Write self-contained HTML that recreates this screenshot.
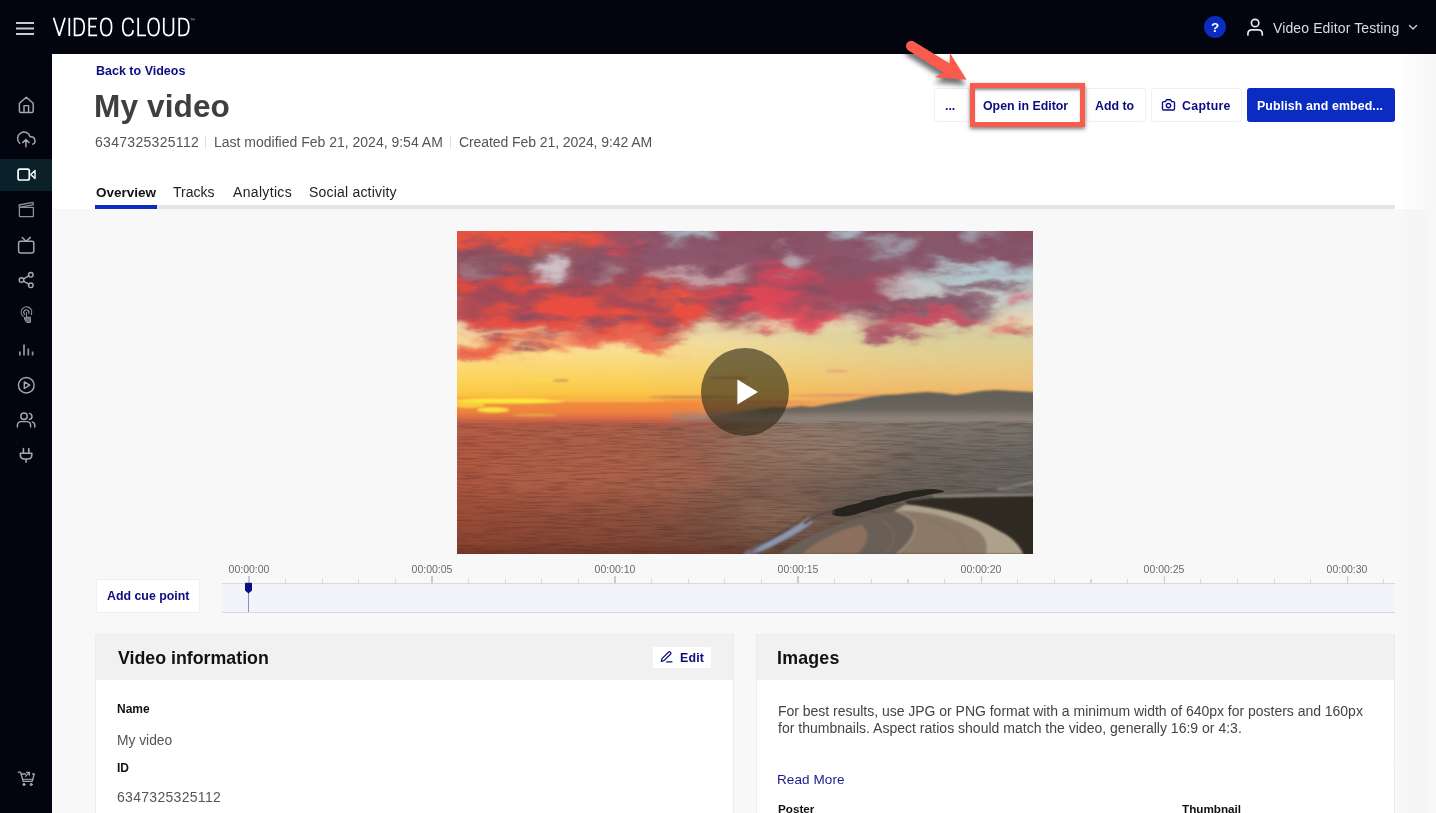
<!DOCTYPE html>
<html>
<head>
<meta charset="utf-8">
<title>My video</title>
<style>
*{box-sizing:border-box;margin:0;padding:0}
html,body{width:1436px;height:813px;overflow:hidden;background:#f8f8f8;font-family:"Liberation Sans",sans-serif;}
.abs{position:absolute}
#topbar{position:absolute;left:0;top:0;width:1436px;height:54px;background:#02040f}
#sidebar{position:absolute;left:0;top:0;width:52px;height:813px;background:#02040f}
#sideactive{position:absolute;left:0;top:159px;width:52px;height:31.5px;background:#0a212a}
#header{position:absolute;left:52px;top:54px;width:1384px;height:155px;background:#fff}
#rstrip{position:absolute;left:1400px;top:54px;width:36px;height:155px;background:linear-gradient(90deg,rgba(0,0,0,0),rgba(0,0,0,.012) 30%,rgba(0,0,0,.02) 60%,rgba(0,0,0,.03))}
.t{position:absolute;white-space:nowrap;line-height:1;will-change:transform}
.btn{position:absolute;top:88.3px;height:34.2px;background:#fff;border:1px solid #f0f0f0;border-radius:2.5px}
.bt{position:absolute;white-space:nowrap;line-height:1;will-change:transform;font-weight:bold;font-size:12.36px;color:#0d0d82}
.ico{position:absolute;fill:none;stroke:#b4b6bb;stroke-width:1.6;stroke-linecap:round;stroke-linejoin:round}
.panelhead{position:absolute;background:#f1f1f1}
.panel{position:absolute;background:#fff;border:1px solid #ececec}
</style>
</head>
<body>
<div id="topbar"></div>
<div id="sidebar"></div>
<div id="sideactive"></div>
<div id="header"></div>
<div id="rstrip"></div>
<div class="abs" style="left:1398px;top:209px;width:38px;height:604px;background:linear-gradient(90deg,#f8f8f8,#f5f5f5 35%,#f5f5f5 60%,#f9f9f9)"></div>

<!-- header text -->
<div class="t" id="back" style="left:95.6px;top:65.3px;font-size:12.5px;font-weight:bold;color:#0d0d82">Back to Videos</div>
<div class="t" id="title" style="left:94.4px;top:91.2px;font-size:31.6px;letter-spacing:.1px;font-weight:bold;color:#3f3f3f">My video</div>
<div class="t" id="meta1" style="left:94.6px;top:135.2px;font-size:14px;letter-spacing:.3px;color:#555">6347325325112</div>
<div class="abs" style="left:205px;top:136px;width:1px;height:13px;background:#e2e2e2"></div>
<div class="t" id="meta2" style="left:214.4px;top:135.2px;font-size:14px;color:#555">Last modified Feb 21, 2024, 9:54 AM</div>
<div class="abs" style="left:450px;top:136px;width:1px;height:13px;background:#e2e2e2"></div>
<div class="t" id="meta3" style="left:458.6px;top:135.2px;font-size:14px;letter-spacing:-.08px;color:#555">Created Feb 21, 2024, 9:42 AM</div>

<!-- tabs -->
<div class="t" id="tab1" style="left:95.6px;top:185.5px;font-size:13.5px;font-weight:bold;color:#111">Overview</div>
<div class="t" id="tab2" style="left:173.4px;top:185.3px;font-size:14px;color:#222">Tracks</div>
<div class="t" id="tab3" style="left:233.4px;top:185.3px;font-size:14px;letter-spacing:.33px;color:#222">Analytics</div>
<div class="t" id="tab4" style="left:309.2px;top:185.3px;font-size:14px;letter-spacing:.2px;color:#222">Social activity</div>
<div class="abs" style="left:95px;top:205px;width:1300px;height:4px;background:#e4e4e4"></div>
<div class="abs" style="left:95px;top:205px;width:62px;height:4px;background:#0b2cc0"></div>

<!-- buttons -->
<div class="btn" style="left:934px;width:36px"></div>
<div class="bt" id="b0" style="left:945px;top:99.9px">...</div>
<div class="btn" style="left:1086px;width:60px"></div>
<div class="bt" id="b2" style="left:1095.2px;top:99.9px">Add to</div>
<div class="btn" style="left:1151px;width:91px"></div>
<svg class="abs" style="left:1160px;top:97px" width="17" height="15" viewBox="0 0 17 15" fill="none" stroke="#0d0d82" stroke-width="1.35" stroke-linejoin="round"><path d="M3.6 4.6H5.4L6.4 2.7H10.6L11.6 4.6H13.4Q14.5 4.6 14.5 5.7V11.9Q14.5 13 13.4 13H3.6Q2.5 13 2.5 11.9V5.7Q2.5 4.6 3.6 4.6Z"/><circle cx="8.5" cy="8.6" r="2.15"/></svg>
<div class="bt" id="b3" style="left:1182px;top:99.9px;letter-spacing:.3px">Capture</div>
<div class="btn" style="left:1247px;width:148px;background:#0b2cc0;border-color:#0b2cc0"></div>
<div class="bt" id="b4" style="left:1257.4px;top:99.7px;letter-spacing:.12px;color:#fff">Publish and embed...</div>
<!-- red highlight -->
<div class="abs" id="redbox" style="left:970px;top:83px;width:115px;height:44px;background:#fff;border:5px solid #f95c4c;box-shadow:0 2px 4px rgba(0,0,0,.5), inset 0 3px 3px -1px rgba(0,0,0,.45)"></div>
<div class="bt" id="b1" style="left:983.2px;top:99.9px">Open in Editor</div>

<!-- topbar content -->
<svg class="abs" style="left:0;top:0" width="220" height="54" viewBox="0 0 220 54">
  <g stroke="#c9cacd" stroke-width="1.8" fill="none">
    <path d="M16 23H34M16 28.5H34M16 34H34"/>
  </g>
  <g id="logo" transform="translate(0,-.45)" stroke="#fff" stroke-width="1.75" fill="none" stroke-linejoin="miter" stroke-linecap="butt">
    <path d="M53.6 18.3L59.3 36.2L65 18.3" stroke-linejoin="bevel"/>
    <path d="M69.3 18.3V36.5"/>
    <path d="M74.6 19H78.2C82.6 19 84.2 21.5 84.2 27.4C84.2 33.3 82.6 35.8 78.2 35.8H74.6Z"/>
    <path d="M97 19H89.2V35.8H97.2M89.2 27H96"/>
    <path d="M106.2 18.8C110 18.8 111.6 21.4 111.6 27.4C111.6 33.4 110 36 106.2 36C102.4 36 100.8 33.4 100.8 27.4C100.8 21.4 102.4 18.8 106.2 18.8Z"/>
    <path d="M133 23.5C132.8 20.4 131.2 18.8 128.2 18.8C124.4 18.8 122.8 21.4 122.8 27.4C122.8 33.4 124.4 36 128.2 36C131.3 36 132.9 34.2 133.1 30.6"/>
    <path d="M138.2 18.3V35.8H146"/>
    <path d="M153.6 18.8C157.4 18.8 159 21.4 159 27.4C159 33.4 157.4 36 153.6 36C149.8 36 148.2 33.4 148.2 27.4C148.2 21.4 149.8 18.8 153.6 18.8Z"/>
    <path d="M163.8 18.3V30.8C163.8 34.4 165.4 36 168.6 36C171.8 36 173.4 34.4 173.4 30.8V18.3"/>
    <path d="M179.2 19H182.8C187.2 19 188.8 21.5 188.8 27.4C188.8 33.3 187.2 35.8 182.8 35.8H179.2Z"/>
  </g>
  <path d="M190.6 18.6H192.2M191.4 18.6V20.4M192.8 20.4V18.6L193.5 19.8L194.2 18.6V20.4" stroke="#aaa" stroke-width=".5" fill="none"/>
</svg>
<div class="abs" style="left:1204px;top:16px;width:22px;height:22px;border-radius:11px;background:#0b2cc0"></div>
<div class="t" id="q" style="left:1211.2px;top:20.6px;font-size:13.5px;font-weight:bold;color:#fff">?</div>
<svg class="abs" style="left:1244px;top:16px" width="22" height="22" viewBox="0 0 22 22" fill="none" stroke="#e8e8ea" stroke-width="1.7" stroke-linecap="round">
  <circle cx="11.1" cy="7" r="3.7"/>
  <path d="M3.9 19V17.8C3.9 15.4 5.6 13.8 8 13.8H14.2C16.6 13.8 18.3 15.4 18.3 17.8V19"/>
</svg>
<div class="t" id="user" style="left:1273.3px;top:20.8px;font-size:14px;letter-spacing:.12px;color:#dcdce0">Video Editor Testing</div>
<svg class="abs" style="left:1407px;top:23px" width="12" height="9" viewBox="0 0 12 9" fill="none" stroke="#d0d0d4" stroke-width="1.4" stroke-linecap="round" stroke-linejoin="round"><path d="M2.5 2.5L6 6L9.5 2.5"/></svg>

<!-- sidebar icons -->
<svg class="abs" style="left:0;top:54px" width="52" height="759" viewBox="0 54 52 759" fill="none" stroke="#a6a8ae" stroke-width="1.45" stroke-linecap="round" stroke-linejoin="round">
  <!-- home -->
  <path d="M19.4 110.9V103.2L26.3 97.2L33.2 103.2V110.9Q33.2 112.4 31.7 112.4H20.9Q19.4 112.4 19.4 110.9ZM24 112.2V105.6H28.6V112.2"/>
  <!-- upload cloud -->
  <path d="M19.8 143.3A6.4 6.4 0 1 1 30.2 136.9A3.9 3.9 0 0 1 32.8 144.2M25.9 146.8V140M22.7 142.6L25.9 139.6L29.1 142.6"/>
  <!-- video camera active -->
  <g stroke="#fff" stroke-width="1.7"><rect x="18.1" y="169.2" width="11.2" height="10.8" rx="1.8"/><path d="M30.8 174.6L35 170.6V178.6Z" stroke-width="1.4"/></g>
  <!-- clapper -->
  <g stroke="#8f9096" stroke-width="1.3"><rect x="19.4" y="207.4" width="14" height="9.2" rx=".6"/><path d="M19.4 207.3L19 205L32.9 202.3L33.5 204.7Z"/></g>
  <!-- tv -->
  <rect x="18.6" y="241.3" width="15.2" height="11.6" rx="1.8"/><path d="M22.2 237.4L26.1 241.2L30.4 237.4"/>
  <!-- share -->
  <circle cx="30.8" cy="274.8" r="2.3"/><circle cx="21.5" cy="280" r="2.3"/><circle cx="30.8" cy="285.3" r="2.3"/><path d="M23.5 278.9L28.8 275.9M23.5 281.1L28.8 284.2"/>
  <!-- touch -->
  <g stroke="#9a9ca2" stroke-width="1.1"><path d="M23.2 316.4A5.3 5.3 0 1 1 31.3 314.4"/><path d="M24.6 314.4A2.6 2.6 0 1 1 28.7 313.6"/><path d="M26.4 312.6V318.2L24.4 317.4V319.4L26.8 322.4H30.4V317.2H26.6" stroke-width="1" fill="#6c6e74"/></g>
  <!-- analytics -->
  <path d="M19.9 351.6V355.6M24 344.6V355.6M28.3 348.6V355.6M32.6 351.6V355.6" stroke="#8f9096" stroke-width="1.8" stroke-linecap="butt"/>
  <!-- play circle -->
  <circle cx="26.3" cy="385.2" r="7.8"/><path d="M24.3 381.9L29.7 385.2L24.3 388.5Z"/>
  <!-- people -->
  <circle cx="24" cy="416.2" r="3.2"/><path d="M17.4 427V425.4C17.4 423 19.2 421.6 21.4 421.6H26.6C28.8 421.6 30.6 423 30.6 425.4V427M29.4 413.4C31 413.8 32 415 32 416.4C32 417.8 31 419 29.4 419.4M34.8 427V425.4C34.8 423.6 33.8 422.4 32.2 421.9"/>
  <!-- plug -->
  <path d="M23.4 448.6V453M28.8 448.6V453M20.4 453.2H31.8V455C31.8 457.6 29.8 459 27.6 459H24.6C22.4 459 20.4 457.6 20.4 455ZM26.1 459V462.2" stroke-width="1.6"/>
  <!-- cart -->
  <path d="M18.2 772.2H20.6L23.2 781.4H32.2L34.2 774H32.6M25.6 774H22" stroke-width="1.3"/><path d="M23 779.3H32.8" stroke-width="1"/><circle cx="24" cy="784.5" r="1.15" fill="#a6a8ae" stroke-width=".8"/><circle cx="31.2" cy="784.5" r="1.15" fill="#a6a8ae" stroke-width=".8"/><path d="M25.6 776.4L29.2 772.6M26.6 772.4H29.4V775.2" stroke-width="1.2"/>
</svg>

<!-- video -->
<svg class="abs" id="video" style="left:457px;top:231px" width="576" height="323" viewBox="0 0 576 323">
<defs>
  <linearGradient id="sky" x1="0" y1="0" x2="0" y2="1">
    <stop offset="0" stop-color="#a6c0ca"/>
    <stop offset=".2" stop-color="#c2cfcc"/>
    <stop offset=".285" stop-color="#eadab4"/>
    <stop offset=".345" stop-color="#fde3a0"/>
    <stop offset=".40" stop-color="#fcdc80"/>
    <stop offset=".465" stop-color="#fcd256"/>
    <stop offset=".515" stop-color="#fbc640"/>
    <stop offset=".55" stop-color="#f59a40"/>
    <stop offset=".585" stop-color="#e8683e"/>
    <stop offset=".60" stop-color="#c95a45"/>
    <stop offset="1" stop-color="#c95a45"/>
  </linearGradient>
  <linearGradient id="skyR" x1="0" y1="0" x2="0" y2="1">
    <stop offset="0" stop-color="#d2cfa4"/>
    <stop offset=".3" stop-color="#e2cd8e"/>
    <stop offset=".55" stop-color="#ecc078"/>
    <stop offset=".75" stop-color="#f0ae5e"/>
    <stop offset="1" stop-color="#ee9e58"/>
  </linearGradient>
  <linearGradient id="skyRm" x1="0" y1="0" x2="1" y2="0">
    <stop offset="0" stop-color="#fff" stop-opacity="0"/>
    <stop offset=".3" stop-color="#fff" stop-opacity=".08"/>
    <stop offset=".5" stop-color="#fff" stop-opacity=".45"/>
    <stop offset=".75" stop-color="#fff" stop-opacity=".9"/>
    <stop offset="1" stop-color="#fff" stop-opacity="1"/>
  </linearGradient>
  <mask id="skyMask" maskUnits="userSpaceOnUse" x="0" y="0" width="576" height="323"><rect x="0" y="0" width="576" height="323" fill="url(#skyRm)"/></mask>
  <linearGradient id="sea" x1="0" y1="0" x2="1" y2="0">
    <stop offset="0" stop-color="#b45a42"/>
    <stop offset=".3" stop-color="#a45e48"/>
    <stop offset=".5" stop-color="#8c6453"/>
    <stop offset=".65" stop-color="#7b675b"/>
    <stop offset=".8" stop-color="#6e665e"/>
    <stop offset="1" stop-color="#686660"/>
  </linearGradient>
  <linearGradient id="seaR" x1="0" y1="0" x2="0" y2="1">
    <stop offset="0" stop-color="#000" stop-opacity="0"/>
    <stop offset=".45" stop-color="#000" stop-opacity=".02"/>
    <stop offset="1" stop-color="#200800" stop-opacity=".3"/>
  </linearGradient>
  <filter id="blur3" filterUnits="userSpaceOnUse" x="-60" y="-60" width="700" height="450"><feGaussianBlur stdDeviation="3"/></filter>
  <filter id="blur5" filterUnits="userSpaceOnUse" x="-60" y="-60" width="700" height="450"><feGaussianBlur stdDeviation="5"/></filter>
  <filter id="blur8" filterUnits="userSpaceOnUse" x="-60" y="-60" width="700" height="450"><feGaussianBlur stdDeviation="8"/></filter>
  <filter id="blur14" filterUnits="userSpaceOnUse" x="-60" y="-60" width="700" height="450"><feGaussianBlur stdDeviation="14"/></filter>
  <filter id="blur1" filterUnits="userSpaceOnUse" x="-60" y="-60" width="700" height="450"><feGaussianBlur stdDeviation="1.2"/></filter>
  <filter id="rag" filterUnits="userSpaceOnUse" x="-60" y="-60" width="700" height="450" color-interpolation-filters="sRGB">
    <feTurbulence type="fractalNoise" baseFrequency="0.022 0.05" numOctaves="4" seed="7" result="n"/>
    <feDisplacementMap in="SourceGraphic" in2="n" scale="34" xChannelSelector="R" yChannelSelector="G" result="d"/>
    <feTurbulence type="fractalNoise" baseFrequency="0.02 0.06" numOctaves="4" seed="23" result="n2"/>
    <feColorMatrix in="n2" type="matrix" values="0 0 0 0 0.53  0 0 0 0 0.30  0 0 0 0 0.38  3.2 0 0 0 -1.55" result="shade"/>
    <feComposite in="shade" in2="d" operator="in" result="shadeIn"/>
    <feMerge><feMergeNode in="d"/><feMergeNode in="shadeIn"/></feMerge>
    <feGaussianBlur stdDeviation="0.7"/>
  </filter>
  <filter id="rag0" filterUnits="userSpaceOnUse" x="-60" y="-60" width="700" height="450" color-interpolation-filters="sRGB">
    <feTurbulence type="fractalNoise" baseFrequency="0.022 0.05" numOctaves="4" seed="7" result="n"/>
    <feDisplacementMap in="SourceGraphic" in2="n" scale="34" xChannelSelector="R" yChannelSelector="G"/>
    <feGaussianBlur stdDeviation="0.7"/>
  </filter>
  <filter id="ripple" filterUnits="userSpaceOnUse" x="0" y="190" width="576" height="140" color-interpolation-filters="sRGB">
    <feTurbulence type="fractalNoise" baseFrequency="0.035 0.55" numOctaves="3" seed="3" result="n"/>
    <feColorMatrix in="n" type="matrix" values="0 0 0 0 0.16  0 0 0 0 0.07  0 0 0 0 0.06  1.6 0 0 0 -0.66"/>
  </filter>
  <clipPath id="vclip"><rect x="0" y="0" width="576" height="323"/></clipPath>
</defs>
<g clip-path="url(#vclip)">
  <rect width="576" height="323" fill="url(#sky)"/>
  <g mask="url(#skyMask)"><rect x="-20" y="96" width="620" height="100" fill="url(#skyR)" filter="url(#blur5)"/></g>
  <g id="clouds" filter="url(#rag)">
    <!-- mauve base layer across top -->
    <g filter="url(#blur8)">
      <rect x="-40" y="-40" width="360" height="112" fill="#b04a52"/><rect x="280" y="-40" width="340" height="66" fill="#8a5669"/><ellipse cx="60" cy="30" rx="100" ry="22" fill="#8f5663"/>
      <ellipse cx="215" cy="28" rx="85" ry="34" fill="#8f566a"/>
      <ellipse cx="340" cy="30" rx="70" ry="34" fill="#8c5469"/>
      <ellipse cx="440" cy="22" rx="70" ry="20" fill="#8a5669"/>
      <ellipse cx="535" cy="18" rx="60" ry="20" fill="#85566a"/>
      <ellipse cx="150" cy="70" rx="170" ry="30" fill="#b04a52"/>
      <ellipse cx="370" cy="62" rx="90" ry="24" fill="#a04c60"/>
      <ellipse cx="470" cy="80" rx="70" ry="10" fill="#8e596a"/>
    </g>
    <!-- red highlights -->
    <g filter="url(#blur5)">
      <ellipse cx="50" cy="6" rx="105" ry="15" fill="#ea5340"/>
      <ellipse cx="40" cy="52" rx="60" ry="8" fill="#e84a3e"/>
      <ellipse cx="130" cy="82" rx="140" ry="18" fill="#ea4d40"/>
      <ellipse cx="215" cy="66" rx="50" ry="8" fill="#ee5440"/>
      <ellipse cx="165" cy="20" rx="14" ry="9" fill="#e34a50"/>
      <ellipse cx="60" cy="112" rx="60" ry="6" fill="#ee6a4a"/>
      <ellipse cx="20" cy="118" rx="26" ry="10" fill="#ec6548"/>
      <ellipse cx="170" cy="108" rx="60" ry="7" fill="#ec5c48"/>
      <ellipse cx="300" cy="66" rx="60" ry="12" fill="#dc4656"/>
      <ellipse cx="340" cy="86" rx="45" ry="12" fill="#e2505a"/>
      <ellipse cx="330" cy="40" rx="35" ry="8" fill="#d0475c"/>
      <ellipse cx="470" cy="86" rx="50" ry="5" fill="#cf4c5e"/>
      <ellipse cx="430" cy="98" rx="30" ry="4" fill="#b4566a"/>
      <ellipse cx="555" cy="97" rx="20" ry="2.5" fill="#e0606a"/>
      <ellipse cx="560" cy="68" rx="16" ry="3" fill="#d46070"/>
    </g>
    <!-- dark mauve patches on top -->
    <g filter="url(#blur5)">
      <ellipse cx="40" cy="30" rx="40" ry="7" fill="#8a5460"/>
      <ellipse cx="45" cy="66" rx="34" ry="7" fill="#9c4858"/>
      <ellipse cx="150" cy="36" rx="30" ry="16" fill="#8f5468"/>
      <ellipse cx="230" cy="24" rx="40" ry="14" fill="#8c566a"/>
      <ellipse cx="180" cy="72" rx="40" ry="8" fill="#a04858"/>
      <ellipse cx="20" cy="78" rx="24" ry="6" fill="#a24c58"/>
      <ellipse cx="330" cy="14" rx="45" ry="12" fill="#8a5268"/>
      <ellipse cx="400" cy="40" rx="40" ry="12" fill="#8a5268"/>
      <ellipse cx="500" cy="24" rx="50" ry="12" fill="#87566a"/>
      <ellipse cx="530" cy="56" rx="46" ry="3.5" fill="#7f5a6a"/>
      <ellipse cx="480" cy="72" rx="55" ry="4" fill="#84586a"/>
      <ellipse cx="350" cy="76" rx="30" ry="5" fill="#9a4c60"/>
    </g>
  </g>
  <g id="gaps" filter="url(#rag0)">
    <!-- light sky gaps -->
    <g filter="url(#blur5)" opacity=".9">
      <ellipse cx="95" cy="36" rx="18" ry="10" fill="#d8d2d8"/>
      <ellipse cx="150" cy="46" rx="14" ry="2.2" fill="#cfc2c6"/>
      <ellipse cx="240" cy="44" rx="50" ry="5" fill="#d8c6c6"/>
      <ellipse cx="232" cy="4" rx="24" ry="7" fill="#a9c8d2"/>
      <ellipse cx="395" cy="4" rx="14" ry="8" fill="#a9c8d2"/>
      <ellipse cx="435" cy="14" rx="26" ry="5" fill="#a8bfca"/>
      <ellipse cx="335" cy="26" rx="14" ry="6" fill="#c8c4cc"/>
      <ellipse cx="540" cy="44" rx="50" ry="9" fill="#b4ccd2"/>
      <ellipse cx="545" cy="66" rx="45" ry="6" fill="#c8d2cc"/>
      <ellipse cx="455" cy="60" rx="30" ry="7" fill="#c9cfcc"/>
      <ellipse cx="20" cy="38" rx="20" ry="2.2" fill="#c9b8bc"/>
      <ellipse cx="525" cy="4" rx="18" ry="5" fill="#a9c4cf"/>
    </g>
    <g filter="url(#blur3)">
      <ellipse cx="530" cy="56" rx="46" ry="3" fill="#7f5a6a"/>
      <ellipse cx="480" cy="72" rx="55" ry="3.5" fill="#84586a"/>
      <ellipse cx="470" cy="86" rx="48" ry="4" fill="#c84c5e"/>
      <ellipse cx="555" cy="97" rx="20" ry="2" fill="#e0606a"/>
      <ellipse cx="562" cy="68" rx="14" ry="2.4" fill="#d46070"/>
      <ellipse cx="430" cy="98" rx="28" ry="3.4" fill="#b4566a"/>
    </g>
  </g>
  <g id="lowsky">
    <g filter="url(#blur3)">
      <rect x="-20" y="169" width="270" height="24" fill="#f4873c"/>
      <rect x="240" y="174" width="130" height="16" fill="#f0904a" fill-opacity=".75"/>
      <rect x="360" y="170" width="100" height="8" fill="#ec9a62" fill-opacity=".6"/>
    </g>
    <g filter="url(#blur1)">
      <ellipse cx="52" cy="170" rx="56" ry="2.6" fill="#fdee3c"/>
      <ellipse cx="12" cy="174" rx="16" ry="3" fill="#f9d13c"/>
      <ellipse cx="36" cy="179" rx="16" ry="3" fill="#fdee3c"/>
      <ellipse cx="78" cy="184.5" rx="23" ry="1.4" fill="#fbdc3c"/>
      <ellipse cx="150" cy="169" rx="60" ry="1.6" fill="#f9c048"/>
      <ellipse cx="236" cy="166" rx="44" ry="1.1" fill="#c48a52"/>
      <ellipse cx="386" cy="164.5" rx="54" ry="1.2" fill="#e29070"/>
      <ellipse cx="300" cy="171" rx="60" ry="1.2" fill="#e9925a"/>
      <ellipse cx="88" cy="149" rx="14" ry="1.1" fill="#f6e04a"/>
      <ellipse cx="104" cy="149.5" rx="8" ry="1" fill="#c9924a"/>
      <ellipse cx="272" cy="147" rx="20" ry="1" fill="#c98a52"/>
      <ellipse cx="380" cy="140" rx="12" ry="1" fill="#e8a078"/>
    </g>
    <rect x="-20" y="185" width="280" height="8" fill="#cf5c44" fill-opacity=".85" filter="url(#blur3)"/>
    <!-- far mountains -->
    <path d="M300 186L330 181L352 177L372 173L392 170L412 166L428 164L440 163.5L455 162L470 161L486 162L498 164L512 162L524 160L540 159L556 160L576 161L610 161V194H300Z" fill="#625e58" filter="url(#blur1)"/>
    <!-- near ridge -->
    <path d="M222 193L240 189L262 185L282 181L300 178L318 176L330 177L345 175L362 178L390 182L420 186L440 193Z" fill="#625b55" filter="url(#blur1)"/>
    <path d="M222 193L240 189L262 185L282 181L300 178" stroke="#b89078" stroke-width="3" fill="none" filter="url(#blur3)"/>
    <rect x="215" y="183" width="420" height="11" fill="#958a80" fill-opacity=".75" filter="url(#blur3)"/>
  </g>
  <g id="seag">
    <rect x="0" y="192" width="576" height="131" fill="url(#sea)"/>
    <rect x="0" y="192" width="576" height="131" fill="url(#seaR)"/>
    <g filter="url(#blur14)">
      <ellipse cx="440" cy="198" rx="200" ry="7" fill="#a09488" fill-opacity=".8"/>
      <ellipse cx="120" cy="198" rx="200" ry="6" fill="#c06a58" fill-opacity=".5"/>
      <ellipse cx="150" cy="240" rx="120" ry="22" fill="#b8684e" fill-opacity=".45"/>
      <ellipse cx="320" cy="282" rx="46" ry="13" fill="#b08468" fill-opacity=".55"/>
      <ellipse cx="345" cy="222" rx="85" ry="15" fill="#a88a72" fill-opacity=".5"/><ellipse cx="320" cy="268" rx="75" ry="12" fill="#6a5246" fill-opacity=".45"/>
      <ellipse cx="420" cy="268" rx="60" ry="10" fill="#5e564e" fill-opacity=".6"/>
    </g>
    <rect x="0" y="194" width="576" height="129" fill="#000" filter="url(#ripple)" opacity=".36"/>
    <rect x="-20" y="189" width="290" height="5" fill="#b8584a" fill-opacity=".6" filter="url(#blur1)"/>
    <!-- shallow water / wet sand -->
    <g filter="url(#blur1)">
      <path d="M322 323C350 304 382 290 420 283C452 278 490 270 520 268L576 266V323Z" fill="#6a5f56"/>
      <path d="M345 323C362 308 384 298 404 294C414 300 412 312 400 323Z" fill="#94745f" fill-opacity=".8"/>
      <path d="M438 279.6C450 284 458 288 458 296C458 306 450 314 440 323L529 323C531 312 528 305 520 299.5C512 294 498 289 480 284C470 282 455 280 438 279.6Z" fill="#8c7a68"/>
      <path d="M438 279.6C455 280 470 282 480 284C498 289 512 294 520 299.5C528 305 531 312 529 323L566.6 323C562 312 552 304 542.2 299.5C528 291 512 285 498 281.8C480 277 462 274 449.3 273Z" fill="#ada18c"/>
      <path d="M438 279.6C450 284 458 288 458 296C458 306 450 314 440 323" stroke="#a89684" stroke-width="1.2" fill="none"/>
      <path d="M470 288C492 294 506 304 508 323" stroke="#7a6a5a" stroke-width=".9" fill="none"/>
      <path d="M425 290C440 298 440 310 428 323" stroke="#857264" stroke-width="1" fill="none"/>
    </g>
    <!-- dark dry sand -->
    <path d="M449 269.7L480 267L520 266L576 264.5H610V340H566.6V323C562 312 552 304 542.2 299.5C528 291 512 285 498 281.8C480 277 462 274 449.3 273Z" fill="#2e2a24" filter="url(#blur1)"/>
    <path d="M476 265.2L600 263.4" stroke="#b0aca2" stroke-width="1.3" fill="none" filter="url(#blur1)"/>
    <path d="M540 258C556 256 566 254 580 250" stroke="#9a9890" stroke-width="2" stroke-opacity=".7" fill="none" filter="url(#blur1)"/>
    <!-- breakwater -->
    <path d="M374.5 281C376 277.5 383 277.8 388 275.6C392 273.2 398 273.8 403 271.4C409 268.6 415 269.4 420 266.8C428 264 436 264.6 443 262.2C452 259.4 460 260.2 468 258.6C476 257.4 484 258.6 487.5 260.6C484 262.6 478 262 472 263.8C464 265.8 456 266.2 448 269C440 271.6 432 272.8 424 275.8C416 278.6 408 280.2 400 283C392 285.6 384 286.2 378 284.6C375 283.8 374 282.4 374.5 281Z" fill="#27231e"/>
    <!-- surf -->
    <path d="M290 323C302 318 316 312 330 304C340 298 348 294 352 290" stroke="#8a97b0" stroke-width="6.5" stroke-linecap="round" fill="none" filter="url(#blur1)"/>
    <path d="M296 323C308 316 322 309 334 301C342 296 348 292 352 288" stroke="#4a4242" stroke-width="1.6" stroke-opacity=".7" fill="none" transform="translate(-3,-3.5)" filter="url(#blur1)"/>
    <path d="M348 292C358 284 368 282 376 281" stroke="#5b4a48" stroke-width="3" stroke-linecap="round" fill="none" filter="url(#blur1)"/>
    <rect x="-20" y="318" width="320" height="10" fill="#5e2a22" fill-opacity=".5" filter="url(#blur3)"/>
  </g>
</g>
<circle cx="288" cy="161" r="44" fill="#2b2616" fill-opacity=".62"/>
<path d="M280.4 148.4L301 161L280.4 173.6Z" fill="#fff"/>
</svg>

<!-- timeline -->
<div class="abs" style="left:95.5px;top:578.5px;width:104.5px;height:34px;background:#fff;border:1px solid #efefef;border-radius:2px"></div>
<div class="bt" id="cue" style="left:106.6px;top:589.6px">Add cue point</div>
<div class="abs" id="track" style="left:222px;top:583px;width:1173px;height:29.5px;background:#f3f3fa;border-top:1px solid #d9d9e2;border-bottom:1.5px solid #d8d8de"></div>
<div class="abs" style="left:248.3px;top:576px;width:1.4px;height:7px;background:#c9c9cf"></div>
<div class="abs" style="left:285.0px;top:579px;width:1.2px;height:4px;background:#d6d6dc"></div>
<div class="abs" style="left:321.6px;top:579px;width:1.2px;height:4px;background:#d6d6dc"></div>
<div class="abs" style="left:358.2px;top:579px;width:1.2px;height:4px;background:#d6d6dc"></div>
<div class="abs" style="left:394.8px;top:579px;width:1.2px;height:4px;background:#d6d6dc"></div>
<div class="abs" style="left:431.4px;top:576px;width:1.4px;height:7px;background:#c9c9cf"></div>
<div class="abs" style="left:468.1px;top:579px;width:1.2px;height:4px;background:#d6d6dc"></div>
<div class="abs" style="left:504.7px;top:579px;width:1.2px;height:4px;background:#d6d6dc"></div>
<div class="abs" style="left:541.3px;top:579px;width:1.2px;height:4px;background:#d6d6dc"></div>
<div class="abs" style="left:577.9px;top:579px;width:1.2px;height:4px;background:#d6d6dc"></div>
<div class="abs" style="left:614.4px;top:576px;width:1.4px;height:7px;background:#c9c9cf"></div>
<div class="abs" style="left:651.1px;top:579px;width:1.2px;height:4px;background:#d6d6dc"></div>
<div class="abs" style="left:687.7px;top:579px;width:1.2px;height:4px;background:#d6d6dc"></div>
<div class="abs" style="left:724.3px;top:579px;width:1.2px;height:4px;background:#d6d6dc"></div>
<div class="abs" style="left:760.9px;top:579px;width:1.2px;height:4px;background:#d6d6dc"></div>
<div class="abs" style="left:797.4px;top:576px;width:1.4px;height:7px;background:#c9c9cf"></div>
<div class="abs" style="left:834.2px;top:579px;width:1.2px;height:4px;background:#d6d6dc"></div>
<div class="abs" style="left:870.8px;top:579px;width:1.2px;height:4px;background:#d6d6dc"></div>
<div class="abs" style="left:907.4px;top:579px;width:1.2px;height:4px;background:#d6d6dc"></div>
<div class="abs" style="left:944.0px;top:579px;width:1.2px;height:4px;background:#d6d6dc"></div>
<div class="abs" style="left:980.5px;top:576px;width:1.4px;height:7px;background:#c9c9cf"></div>
<div class="abs" style="left:1017.2px;top:579px;width:1.2px;height:4px;background:#d6d6dc"></div>
<div class="abs" style="left:1053.8px;top:579px;width:1.2px;height:4px;background:#d6d6dc"></div>
<div class="abs" style="left:1090.4px;top:579px;width:1.2px;height:4px;background:#d6d6dc"></div>
<div class="abs" style="left:1127.0px;top:579px;width:1.2px;height:4px;background:#d6d6dc"></div>
<div class="abs" style="left:1163.5px;top:576px;width:1.4px;height:7px;background:#c9c9cf"></div>
<div class="abs" style="left:1200.3px;top:579px;width:1.2px;height:4px;background:#d6d6dc"></div>
<div class="abs" style="left:1236.9px;top:579px;width:1.2px;height:4px;background:#d6d6dc"></div>
<div class="abs" style="left:1273.5px;top:579px;width:1.2px;height:4px;background:#d6d6dc"></div>
<div class="abs" style="left:1310.1px;top:579px;width:1.2px;height:4px;background:#d6d6dc"></div>
<div class="abs" style="left:1346.6px;top:576px;width:1.4px;height:7px;background:#c9c9cf"></div>
<div class="abs" style="left:1383.3px;top:579px;width:1.2px;height:4px;background:#d6d6dc"></div>
<div class="t tl" style="left:209.0px;top:564px;width:80px;text-align:center;font-size:10.5px;color:#6a6a6a">00:00:00</div>
<div class="t tl" style="left:392.1px;top:564px;width:80px;text-align:center;font-size:10.5px;color:#6a6a6a">00:00:05</div>
<div class="t tl" style="left:575.1px;top:564px;width:80px;text-align:center;font-size:10.5px;color:#6a6a6a">00:00:10</div>
<div class="t tl" style="left:758.2px;top:564px;width:80px;text-align:center;font-size:10.5px;color:#6a6a6a">00:00:15</div>
<div class="t tl" style="left:941.2px;top:564px;width:80px;text-align:center;font-size:10.5px;color:#6a6a6a">00:00:20</div>
<div class="t tl" style="left:1124.2px;top:564px;width:80px;text-align:center;font-size:10.5px;color:#6a6a6a">00:00:25</div>
<div class="t tl" style="left:1307.3px;top:564px;width:80px;text-align:center;font-size:10.5px;color:#6a6a6a">00:00:30</div>
<div class="abs" style="left:248.3px;top:584px;width:1.2px;height:28px;background:#8b8fd0"></div>
<svg class="abs" style="left:244.3px;top:582px" width="9" height="13" viewBox="0 0 9 13"><path d="M1 1.5Q1 .7 1.8 .7H7.2Q8 .7 8 1.5V8.6L4.5 11.4L1 8.6Z" fill="#0d0d82"/></svg>
<!-- left panel -->
<div class="panel" style="left:95px;top:634px;width:639px;height:200px"></div>
<div class="panelhead" style="left:96px;top:635px;width:637px;height:45px"></div>
<div class="t" id="ph1" style="left:118px;top:650px;font-size:17.8px;font-weight:bold;color:#111">Video information</div>
<div class="abs" style="left:652.8px;top:646.8px;width:58.5px;height:21.2px;background:#fff;border-radius:1px"></div>
<svg class="abs" style="left:659px;top:650px" width="15" height="15" viewBox="0 0 15 15" fill="none" stroke="#0d0d82" stroke-width="1.2" stroke-linecap="round" stroke-linejoin="round"><path d="M2.3 11.4L3 8.7L9.7 2Q10.4 1.4 11.1 2L11.7 2.6Q12.3 3.3 11.7 4L5 10.7ZM7.6 11.8H13"/></svg>
<div class="bt" id="edit" style="left:679.6px;top:651.8px;letter-spacing:.2px">Edit</div>
<div class="t" id="l1" style="left:117.3px;top:702.7px;font-size:12px;font-weight:bold;color:#111">Name</div>
<div class="t" id="v1" style="left:117px;top:733.8px;font-size:13.8px;color:#555">My video</div>
<div class="t" id="l2" style="left:117.3px;top:761.8px;font-size:12px;font-weight:bold;color:#111">ID</div>
<div class="t" id="v2" style="left:117px;top:790.2px;font-size:14px;letter-spacing:.3px;color:#555">6347325325112</div>

<!-- right panel -->
<div class="panel" style="left:756px;top:634px;width:639px;height:200px"></div>
<div class="panelhead" style="left:757px;top:635px;width:637px;height:45px"></div>
<div class="t" id="ph2" style="left:777.4px;top:650px;font-size:17.8px;letter-spacing:.2px;font-weight:bold;color:#111">Images</div>
<div class="t" id="p1" style="left:777.6px;top:704px;letter-spacing:-.02px;font-size:14px;color:#444">For best results, use JPG or PNG format with a minimum width of 640px for posters and 160px</div>
<div class="t" id="p2" style="left:777.6px;top:721.3px;letter-spacing:.01px;font-size:14px;color:#444">for thumbnails. Aspect ratios should match the video, generally 16:9 or 4:3.</div>
<div class="t" id="rm" style="left:777.4px;top:772.9px;font-size:13.5px;letter-spacing:.1px;color:#1a1a8c">Read More</div>
<div class="t" id="l3" style="left:777.6px;top:803px;font-size:11.7px;font-weight:bold;color:#111">Poster</div>
<div class="t" id="l4" style="left:1181.6px;top:803px;font-size:11.7px;font-weight:bold;color:#111">Thumbnail</div>
<svg class="abs" style="left:880px;top:20px;overflow:visible" width="120" height="90" viewBox="880 20 120 90">
<defs><filter id="ash" filterUnits="userSpaceOnUse" x="860" y="10" width="160" height="120"><feGaussianBlur stdDeviation="2.6"/></filter></defs>
<path d="M913.8 41.4L949.8 63.6L949.8 52.8L966.6 79.7L934.8 77.3L943.8 72.6L908.4 50.4A5.25 5.25 0 0 1 913.8 41.4Z" fill="#000" fill-opacity=".55" transform="translate(-1,5.5)" filter="url(#ash)"/>
<path d="M913.8 41.4L949.8 63.6L949.8 52.8L966.6 79.7L934.8 77.3L943.8 72.6L908.4 50.4A5.25 5.25 0 0 1 913.8 41.4Z" fill="#fb5b4c"/>
</svg>
</body>
</html>
